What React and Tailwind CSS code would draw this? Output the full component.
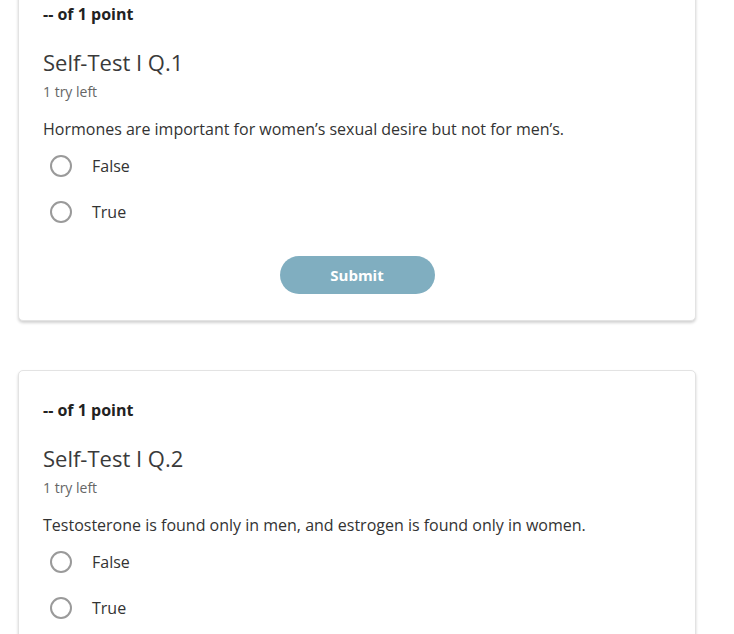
import React from "react";

function Radio({ label }) {
  return (
    <div className="flex h-[46px] items-center">
      <span className="ml-[7px] box-border h-[22px] w-[22px] rounded-full border-2 border-[#9a9a9a] bg-white" />
      <span className="ml-[20px] text-[16px] leading-[20px] text-[#333]">{label}</span>
    </div>
  );
}

function Card({ title, question, showSubmit, className }) {
  return (
    <div
      className={
        "ml-[18px] w-[678px] rounded-[5px] border border-[#e3e3e3] bg-white pl-[24px] pr-[24px] pt-[29px] shadow-[0_2px_3px_rgba(0,0,0,0.18)] " +
        className
      }
    >
      <div className="text-[16px] font-bold leading-[20px] text-[#222]">-- of 1 point</div>
      <div className="mt-[23px] text-[22px] leading-[30px] text-[#3a3a3a]">{title}</div>
      <div className="mt-[7px] text-[14px] leading-[16px] text-[#666]">1 try left</div>
      <div className="mt-[19px] text-[16px] leading-[20px] text-[#333]">{question}</div>
      <div className="mt-[4px]">
        <Radio label="False" />
        <Radio label="True" />
      </div>
      {showSubmit && (
        <div className="flex justify-center pb-[26px] pt-[21px]">
          <button className="h-[38px] w-[155px] rounded-full bg-[#80aec0] text-[15px] font-bold text-white">
            Submit
          </button>
        </div>
      )}
    </div>
  );
}

export default function App() {
  return (
    <div
      className="h-[634px] overflow-hidden bg-white"
      style={{ fontFamily: '"Open Sans", "Noto Sans", sans-serif' }}
    >
      <Card
        className="-mt-[26px]"
        title="Self-Test I Q.1"
        question="Hormones are important for women’s sexual desire but not for men’s."
        showSubmit
      />
      <Card
        className="mt-[49px]"
        title="Self-Test I Q.2"
        question="Testosterone is found only in men, and estrogen is found only in women."
        showSubmit
      />
    </div>
  );
}
